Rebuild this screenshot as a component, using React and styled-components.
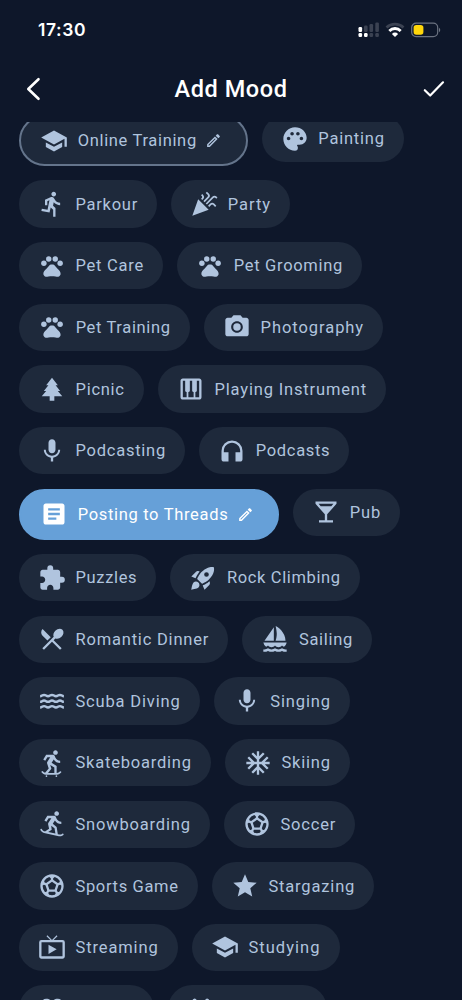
import React from 'react';
import styled, { createGlobalStyle, css } from 'styled-components';
import {
  MdSchool, MdPalette, MdDirectionsRun, MdCelebration, MdPets, MdPhotoCamera, MdPiano,
  MdMic, MdHeadphones, MdArticle, MdLocalBar, MdExtension,
  MdRestaurantMenu, MdSailing, MdSkateboarding, MdAcUnit, MdSnowboarding,
  MdSportsSoccer, MdStar, MdLiveTv, MdOutlineEdit,
} from 'react-icons/md';

const LABEL_FONT = '400 16.5px Roboto, sans-serif';
const TITLE_FONT = '500 23.5px Roboto, sans-serif';
const CLOCK_FONT = '600 17.5px Inter, sans-serif';

const GlobalStyle = createGlobalStyle`
  html, body { margin: 0; background: #0e172a; }
  *, *::before, *::after { box-sizing: border-box; }
`;

const Screen = styled.main`
  height: 1000px;
  width: 462px;
  overflow: hidden;
  display: flex;
  flex-direction: column;
  background: #0e172a;
  color: #fff;
`;

const StatusBar = styled.div`
  flex: none;
  height: 58px;
  padding: 0 21.5px 0 38px;
  display: flex;
  align-items: center;
  justify-content: space-between;
`;

const Indicators = styled.div`
  display: flex;
  align-items: center;
  gap: 5.5px;
  padding-top: 1px;
  svg { display: block; }
`;

const Header = styled.header`
  flex: none;
  height: 64px;
  padding: 0 17px 2px 25px;
  display: grid;
  grid-template-columns: 52px 1fr 60px;
  align-items: center;
  justify-items: center;
`;

const HeaderButton = styled.button`
  border: 0;
  padding: 0;
  background: none;
  color: #fff;
  display: flex;
  justify-self: ${(p) => p.$side};
`;

const Fitted = styled.span`
  display: block;
  flex: none;
  white-space: pre;
  width: ${(p) => p.$width}px;
  padding-top: 2px;
  font: ${(p) => p.$font};
  line-height: 1.25;
`;

const List = styled.section`
  flex: 1;
  min-height: 0;
  overflow: hidden;
  display: flex;
  flex-direction: column;
  justify-content: flex-start;
`;

const Rows = styled.div`
  margin-top: -6.9px;
  padding-left: 19px;
  display: flex;
  flex-direction: column;
  gap: 14.35px;
`;

const Row = styled.div`
  display: flex;
  align-items: flex-start;
  gap: 14.3px;
`;

const Chip = styled.button`
  flex: none;
  display: flex;
  align-items: center;
  width: ${(p) => p.$width}px;
  height: 47.3px;
  padding: 0 0 0 20px;
  border: 0;
  border-radius: 24px;
  background: #1e293b;
  color: #b0c4de;
  ${(p) => p.$custom && css`
    height: 51px;
    border: 2px solid #64748b;
    border-radius: 26px;
  `}
  ${(p) => p.$selected && css`
    background: #66a0d8;
    border-color: #66a0d8;
    color: #fff;
  `}
`;

const IconBox = styled.span`
  flex: none;
  width: 26px;
  margin-right: 10.5px;
  display: flex;
  justify-content: center;
  svg { flex: none; display: block; width: ${(p) => p.$size || 28}px; height: ${(p) => p.$size || 28}px; }
`;

const EditIcon = styled(MdOutlineEdit)`
  flex: none;
  margin-left: 8px;
  width: 17px;
  height: 17px;
`;

/* Spreads a line of text over an exact width by adjusting its tracking. */
const ctx = document.createElement('canvas').getContext('2d');
function FittedText({ text, width, font, as }) {
  ctx.font = font;
  const tracking = (width - ctx.measureText(text).width) / text.length;
  return (
    <Fitted as={as} $width={width} $font={font} style={{ letterSpacing: `${tracking}px`, margin: 0 }}>
      {text}
    </Fitted>
  );
}

const PineTree = () => (
  <svg viewBox="0 0 24 24" fill="currentColor">
    <path d="M12 2.300 7 8.700h1.900L5 13.700h2L3.200 18.300H10v3.800h4v-3.800h6.800L17 13.700h2l-3.900-5H17z" />
  </svg>
);

const Waves = () => (
  <svg viewBox="0 0 24 24" fill="none" stroke="currentColor" strokeWidth="2.100">
    {[7.4, 12.2, 17].map((y) => (
      <path key={y} d={`M1.800 ${y + 0.5}c1.700 0 1.700-1.100 3.400-1.100s1.700 1.100 3.400 1.100 1.700-1.100 3.400-1.100 1.700 1.100 3.400 1.100 1.700-1.100 3.400-1.100 1.700 1.100 3.400 1.100`} />
    ))}
  </svg>
);

const Rocket = () => (
  <svg viewBox="0 0 24 24" fill="currentColor">
    <path d="M9.190 6.350c-2.040 2.290-3.440 5.580-3.570 5.890L2 10.690l4.050-4.050c.47-.47 1.150-.68 1.810-.55l1.330.26z" />
    <path fillRule="evenodd" d="M11.170 17s3.740-1.550 5.890-3.700c5.400-5.400 4.500-9.620 4.210-10.570-.95-.3-5.170-1.190-10.570 4.210C8.550 9.090 7 12.830 7 12.830L11.170 17zM15 7a2 2 0 1 1 0 4 2 2 0 0 1 0-4z" />
    <path d="M17.650 14.810c-2.290 2.040-5.580 3.440-5.890 3.570L13.310 22l4.050-4.050c.47-.47.68-1.150.55-1.810l-.26-1.330zM9 18c0 .83-.34 1.580-.88 2.120C6.940 21.300 2 22 2 22s.7-4.940 1.880-6.120A3 3 0 0 1 9 18z" />
  </svg>
);

const OpenBook = () => (
  <svg viewBox="0 0 24 24" fill="currentColor">
    <path d="M7 3.300C4.500 3.300 3 5 3 7.500 3 13 9 17 12 21c3-4 9-8 9-13.500 0-2.500-1.500-4.200-4-4.200-2.500 0-4 .9-5 2.700-1-1.800-2.500-2.700-5-2.700z" />
  </svg>
);

const CrossedBats = () => (
  <svg viewBox="0 0 24 24" fill="none" stroke="currentColor" strokeWidth="3.200" strokeLinecap="round">
    <path d="M6.500 4.600 18 19M17.300 4.600 6 19" />
  </svg>
);

const rows = [
  [{ label: 'Online Training', icon: MdSchool, width: 228.5, text: 119.5, custom: true }, { label: 'Painting', icon: MdPalette, width: 142 }],
  [{ label: 'Parkour', icon: MdDirectionsRun, width: 138 }, { label: 'Party', icon: MdCelebration, width: 118.7 }],
  [{ label: 'Pet Care', icon: MdPets, size: 26, width: 144 }, { label: 'Pet Grooming', icon: MdPets, size: 26, width: 184.7 }],
  [{ label: 'Pet Training', icon: MdPets, size: 26, width: 170.8 }, { label: 'Photography', icon: MdPhotoCamera, width: 179 }],
  [{ label: 'Picnic', icon: PineTree, width: 124.7 }, { label: 'Playing Instrument', icon: MdPiano, width: 228 }],
  [{ label: 'Podcasting', icon: MdMic, width: 166 }, { label: 'Podcasts', icon: MdHeadphones, width: 150 }],
  [{ label: 'Posting to Threads', icon: MdArticle, width: 260, text: 151, custom: true, selected: true }, { label: 'Pub', icon: MdLocalBar, width: 107 }],
  [{ label: 'Puzzles', icon: MdExtension, width: 137.2 }, { label: 'Rock Climbing', icon: Rocket, width: 189.2 }],
  [{ label: 'Romantic Dinner', icon: MdRestaurantMenu, width: 209.2 }, { label: 'Sailing', icon: MdSailing, width: 129.4 }],
  [{ label: 'Scuba Diving', icon: Waves, width: 180.5 }, { label: 'Singing', icon: MdMic, width: 136.2 }],
  [{ label: 'Skateboarding', icon: MdSkateboarding, width: 191.7 }, { label: 'Skiing', icon: MdAcUnit, width: 124.7 }],
  [{ label: 'Snowboarding', icon: MdSnowboarding, width: 190.7 }, { label: 'Soccer', icon: MdSportsSoccer, width: 131.3 }],
  [{ label: 'Sports Game', icon: MdSportsSoccer, width: 178.6 }, { label: 'Stargazing', icon: MdStar, width: 162.3 }],
  [{ label: 'Streaming', icon: MdLiveTv, width: 158.6 }, { label: 'Studying', icon: MdSchool, width: 147.7 }],
  [{ icon: OpenBook, width: 135 }, { icon: CrossedBats, width: 158.7 }],
];

function Activity({ label, icon: Icon, size, width, text, custom, selected }) {
  return (
    <Chip $width={width} $custom={custom} $selected={selected}>
      <IconBox $size={size}><Icon /></IconBox>
      {label && <FittedText text={label} width={text || width - 75.5} font={LABEL_FONT} />}
      {custom && <EditIcon />}
    </Chip>
  );
}

const Signal = () => (
  <svg width="22" height="16" viewBox="0 0 22 16">
    <g fill="#fff">
      <rect x="0.500" y="5" width="3.600" height="5" rx="1.200" />
      <rect x="0.500" y="11" width="3.600" height="4" rx="1.200" />
      <rect x="6" y="11" width="3.600" height="4" rx="1.200" />
    </g>
    <g fill="#3b4252">
      <rect x="6" y="3.500" width="3.600" height="6.500" rx="1.200" />
      <rect x="11.500" y="2" width="3.600" height="8" rx="1.200" />
      <rect x="17.300" y="0.500" width="3.600" height="9.500" rx="1.200" />
      <rect x="11.500" y="11" width="3.600" height="4" rx="1.200" />
      <rect x="17.300" y="11" width="3.600" height="4" rx="1.200" />
    </g>
  </svg>
);

const Wifi = () => (
  <svg width="20" height="16" viewBox="0 0 20 16" fill="none">
    <path d="M1.500 5.400a12.400 12.400 0 0 1 17 0" stroke="#3b4252" strokeWidth="2.700" />
    <path d="M4.300 8.900a8 8 0 0 1 11.400 0" stroke="#fff" strokeWidth="2.800" />
    <path d="M10 15l-3.100-3.100a4.400 4.400 0 0 1 6.200 0z" fill="#fff" />
  </svg>
);

const Battery = () => (
  <svg width="30" height="16" viewBox="0 0 30 16" fill="none">
    <rect x="0.700" y="1.200" width="26" height="13.400" rx="4.400" stroke="#6b7280" strokeWidth="1.200" />
    <rect x="2.600" y="3.100" width="9.800" height="9.600" rx="2.700" fill="#ffd60a" />
    <path d="M28 5.700c1.700.8 1.700 3.700 0 4.500z" fill="#6b7280" />
  </svg>
);

export default function App() {
  return (
    <Screen>
      <GlobalStyle />
      <StatusBar>
        <FittedText text="17:30" width={48} font={CLOCK_FONT} />
        <Indicators><Signal /><Wifi /><Battery /></Indicators>
      </StatusBar>
      <Header>
        <HeaderButton $side="start" aria-label="Back">
          <svg width="17" height="24" viewBox="0 0 17 24" fill="none" stroke="currentColor" strokeWidth="2.600" strokeLinecap="round" strokeLinejoin="round">
            <path d="M13.500 2.200 3.300 12l10.200 9.800" />
          </svg>
        </HeaderButton>
        <FittedText as="h1" text="Add Mood" width={113} font={TITLE_FONT} />
        <HeaderButton $side="end" aria-label="Save">
          <svg width="22" height="20" viewBox="0 0 22 20" fill="none" stroke="currentColor" strokeWidth="2.200" strokeLinecap="round" strokeLinejoin="round">
            <path d="M1.800 11.200l5.400 5.300L20 3.300" />
          </svg>
        </HeaderButton>
      </Header>
      <List>
        <Rows>
          {rows.map((row) => (
            <Row key={row[0].label || 'last'}>
              {row.map((item, i) => <Activity key={i} {...item} />)}
            </Row>
          ))}
        </Rows>
      </List>
    </Screen>
  );
}
